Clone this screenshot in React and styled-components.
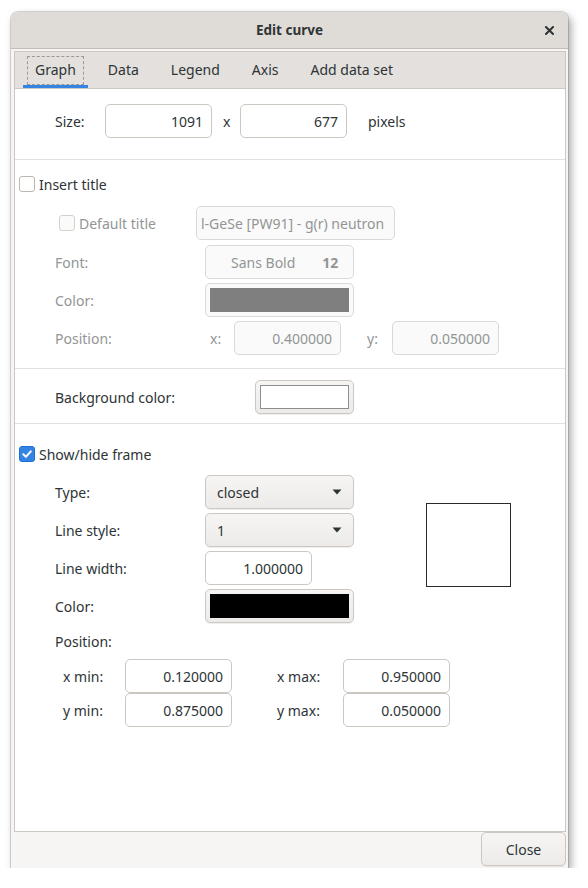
import React from 'react';
import styled, { createGlobalStyle } from 'styled-components';

const GlobalStyle = createGlobalStyle`
  html, body {
    margin: 0;
    padding: 0;
    background: #ffffff;
  }
  body {
    font-family: "Noto Sans", "DejaVu Sans", sans-serif;
    font-size: 14px;
    color: #2e3436;
  }
`;

const Page = styled.div`
  padding: 12px 0 0 11px;
`;

const Window = styled.div`
  width: 557px;
  height: 856px;
  display: flex;
  flex-direction: column;
  background: #f6f5f4;
  border-radius: 7px 7px 0 0;
  box-shadow: 0 0 0 1px rgba(0, 0, 0, 0.14), 3px 4px 9px rgba(0, 0, 0, 0.35);
  overflow: hidden;
`;

const TitleBar = styled.header`
  flex: none;
  height: 36px;
  display: grid;
  grid-template-columns: 1fr auto 1fr;
  align-items: center;
  background: #dfdcd8;
  border-bottom: 1px solid #c3bdb7;
`;

const Title = styled.div`
  grid-column: 2;
  font-weight: 700;
  font-size: 13.5px;
`;

const CloseX = styled.div`
  justify-self: end;
  margin-right: 14px;
  display: flex;
`;

const Body = styled.div`
  flex: 1;
  display: flex;
  flex-direction: column;
  padding: 2px 2px 0 3px;
  min-height: 0;
`;

const Notebook = styled.div`
  flex: 1;
  display: flex;
  flex-direction: column;
  border: 1px solid #cdc7c2;
  background: #ffffff;
`;

const TabStrip = styled.div`
  flex: none;
  height: 36px;
  display: flex;
  gap: 8px;
  padding-left: 8px;
  background: #e3e0dd;
  border-bottom: 1px solid #cdc7c2;
`;

const Tab = styled.div`
  display: flex;
  padding: 4px 4px 0;
  border-bottom: 3px solid ${p => (p.$active ? '#3584e4' : 'transparent')};
`;

const TabLabel = styled.div`
  display: flex;
  align-items: center;
  padding: 0 7px 2px;
  border: 1px dashed ${p => (p.$focus ? '#9a9896' : 'transparent')};
`;

const Content = styled.div`
  flex: 1;
  display: flex;
  flex-direction: column;
`;

const Section = styled.div`
  display: flex;
  flex-direction: column;
  gap: ${p => p.$gap || 0}px;
  padding: ${p => p.$pad};
  border-bottom: ${p => (p.$sep ? '1px solid #e3e0dd' : 'none')};
`;

const Row = styled.div`
  display: flex;
  align-items: center;
  height: ${p => p.$h || 34}px;
  padding-left: ${p => p.$indent || 40}px;
  margin-bottom: ${p => p.$mb || 0}px;
`;

const Label = styled.div`
  flex: none;
  width: ${p => p.$w}px;
  margin-left: ${p => p.$ml || 0}px;
  color: ${p => (p.$disabled ? '#929595' : '#2e3436')};
`;

const Entry = styled.input`
  box-sizing: border-box;
  flex: none;
  width: ${p => p.$w || 107}px;
  height: 34px;
  padding: 0 ${p => p.$pr ?? 8}px 0 ${p => p.$pl ?? 8}px;
  border: 1px solid ${p => (p.disabled ? '#dcd8d4' : '#cdc7c2')};
  border-radius: 5px;
  background: ${p => (p.disabled ? '#fafafa' : '#ffffff')};
  color: ${p => (p.disabled ? '#929595' : '#2e3436')};
  font: inherit;
  text-align: ${p => p.$align || 'right'};
  outline: none;
`;

const Button = styled.div`
  box-sizing: border-box;
  flex: none;
  display: flex;
  align-items: center;
  gap: ${p => p.$gap || 0}px;
  width: ${p => p.$w || 149}px;
  height: 34px;
  padding: ${p => p.$pad || '0 11px'};
  border: 1px solid ${p => (p.$disabled ? '#dcd8d4' : '#cdc7c2')};
  border-radius: 5px;
  background: ${p => (p.$disabled ? '#fafafa' : 'linear-gradient(#f6f5f4, #edebe9)')};
  box-shadow: ${p => (p.$disabled ? 'none' : '0 1px 1px rgba(0,0,0,0.07)')};
  color: ${p => (p.$disabled ? '#929595' : '#2e3436')};
`;

const Swatch = styled.div`
  flex: 1;
  align-self: stretch;
  background: ${p => p.$color};
  border: ${p => (p.$outline ? '1px solid #8e8e8e' : 'none')};
`;

const DropText = styled.span`
  flex: 1;
`;

const Bold = styled.span`
  font-weight: 700;
`;

const CheckRow = styled.label`
  display: flex;
  align-items: center;
  gap: 4px;
  width: ${p => (p.$w ? `${p.$w}px` : 'auto')};
  flex: none;
  color: ${p => (p.$disabled ? '#929595' : '#2e3436')};
`;

const Box = styled.span`
  box-sizing: border-box;
  width: 16px;
  height: 16px;
  display: flex;
  align-items: center;
  justify-content: center;
  border-radius: 3px;
  border: 1px solid ${p => (p.$checked ? '#1c6fd6' : p.$disabled ? '#d5d0cc' : '#bdb6b0')};
  background: ${p => (p.$checked ? '#3584e4' : p.$disabled ? '#fafafa' : '#ffffff')};
`;

const FrameArea = styled.div`
  display: flex;
  align-items: flex-start;
  margin-top: 13px;
`;

const FrameFields = styled.div`
  display: flex;
  flex-direction: column;
  gap: 4px;
`;

const Preview = styled.div`
  box-sizing: border-box;
  width: 85px;
  height: 84px;
  margin: 28px 0 0 72px;
  border: 1px solid #2a2a2a;
  background: #ffffff;
`;

const Footer = styled.div`
  flex: none;
  height: 36px;
  display: flex;
  justify-content: flex-end;
  align-items: flex-start;
  padding-right: 2px;
`;

const CloseButton = styled.div`
  box-sizing: border-box;
  width: 85px;
  height: 34px;
  display: flex;
  align-items: center;
  justify-content: center;
  border: 1px solid #cdc7c2;
  border-radius: 5px;
  background: linear-gradient(#f6f5f4, #edebe9);
  box-shadow: 0 1px 1px rgba(0, 0, 0, 0.07);
`;

const Check = ({ checked, disabled }) => (
  <Box $checked={checked} $disabled={disabled}>
    {checked && (
      <svg width="12" height="12" viewBox="0 0 12 12">
        <path d="M2.3 6.3 L4.9 8.8 L9.8 3.4" fill="none" stroke="#fff" strokeWidth="2" strokeLinecap="round" strokeLinejoin="round" />
      </svg>
    )}
  </Box>
);

const Arrow = () => (
  <svg width="10" height="6" viewBox="0 0 10 6">
    <path d="M0.5 0.5 L9.5 0.5 L5 5.5 Z" fill="#2e3436" />
  </svg>
);

const tabs = ['Graph', 'Data', 'Legend', 'Axis', 'Add data set'];

export default function App() {
  return (
    <Page>
      <GlobalStyle />
      <Window>
        <TitleBar>
          <Title>Edit curve</Title>
          <CloseX>
            <svg width="9" height="9" viewBox="0 0 9 9">
              <path d="M1 1 L8 8 M8 1 L1 8" stroke="#2e3436" strokeWidth="2" strokeLinecap="square" />
            </svg>
          </CloseX>
        </TitleBar>
        <Body>
          <Notebook>
            <TabStrip>
              {tabs.map((t, i) => (
                <Tab key={t} $active={i === 0}>
                  <TabLabel $focus={i === 0}>{t}</TabLabel>
                </Tab>
              ))}
            </TabStrip>
            <Content>
              <Section $sep $pad="15px 0 21px">
                <Row>
                  <Label $w={50}>Size:</Label>
                  <Entry readOnly value="1091" />
                  <Label $w={17} $ml={11}>x</Label>
                  <Entry readOnly value="677" />
                  <Label $w={50} $ml={21}>pixels</Label>
                </Row>
              </Section>

              <Section $sep $pad="16px 0 13px">
                <Row $h={16} $indent={4}>
                  <CheckRow>
                    <Check />
                    Insert title
                  </CheckRow>
                </Row>
                <Section $gap={4} $pad="14px 0 0">
                  <Row $indent={44} $mb={1}>
                    <CheckRow $w={137} $disabled>
                      <Check disabled />
                      Default title
                    </CheckRow>
                    <Entry disabled $w={199} $align="left" $pl={4} value="l-GeSe [PW91] - g(r) neutron" />
                  </Row>
                  <Row>
                    <Label $w={150} $disabled>Font:</Label>
                    <Button $disabled $pad="0 0 0 25px" $gap={27}>
                      <span>Sans Bold</span>
                      <Bold>12</Bold>
                    </Button>
                  </Row>
                  <Row>
                    <Label $w={150} $disabled>Color:</Label>
                    <Button $disabled $pad="4px">
                      <Swatch $color="#7f7f7f" />
                    </Button>
                  </Row>
                  <Row>
                    <Label $w={150} $disabled>Position:</Label>
                    <Label $w={24} $ml={5} $disabled>x:</Label>
                    <Entry disabled value="0.400000" />
                    <Label $w={25} $ml={26} $disabled>y:</Label>
                    <Entry disabled value="0.050000" />
                  </Row>
                </Section>
              </Section>

              <Section $sep $pad="11px 0 9px">
                <Row>
                  <Label $w={200}>Background color:</Label>
                  <Button $w={99} $pad="4px">
                    <Swatch $color="#ffffff" $outline />
                  </Button>
                </Row>
              </Section>

              <Section $pad="22px 0 0">
                <Row $h={16} $indent={4}>
                  <CheckRow>
                    <Check checked />
                    Show/hide frame
                  </CheckRow>
                </Row>
                <FrameArea>
                  <FrameFields>
                    <Row>
                      <Label $w={150}>Type:</Label>
                      <Button>
                        <DropText>closed</DropText>
                        <Arrow />
                      </Button>
                    </Row>
                    <Row>
                      <Label $w={150}>Line style:</Label>
                      <Button>
                        <DropText>1</DropText>
                        <Arrow />
                      </Button>
                    </Row>
                    <Row>
                      <Label $w={150}>Line width:</Label>
                      <Entry readOnly value="1.000000" />
                    </Row>
                    <Row>
                      <Label $w={150}>Color:</Label>
                      <Button $pad="4px">
                        <Swatch $color="#000000" />
                      </Button>
                    </Row>
                    <Row $h={28}>
                      <Label $w={150}>Position:</Label>
                    </Row>
                  </FrameFields>
                  <Preview />
                </FrameArea>
                <Section $pad="4px 0 0">
                  <Row $indent={48}>
                    <Label $w={62}>x min:</Label>
                    <Entry readOnly value="0.120000" />
                    <Label $w={66} $ml={45}>x max:</Label>
                    <Entry readOnly value="0.950000" />
                  </Row>
                  <Row $indent={48}>
                    <Label $w={62}>y min:</Label>
                    <Entry readOnly value="0.875000" />
                    <Label $w={66} $ml={45}>y max:</Label>
                    <Entry readOnly value="0.050000" />
                  </Row>
                </Section>
              </Section>
            </Content>
          </Notebook>
        </Body>
        <Footer>
          <CloseButton>Close</CloseButton>
        </Footer>
      </Window>
    </Page>
  );
}
